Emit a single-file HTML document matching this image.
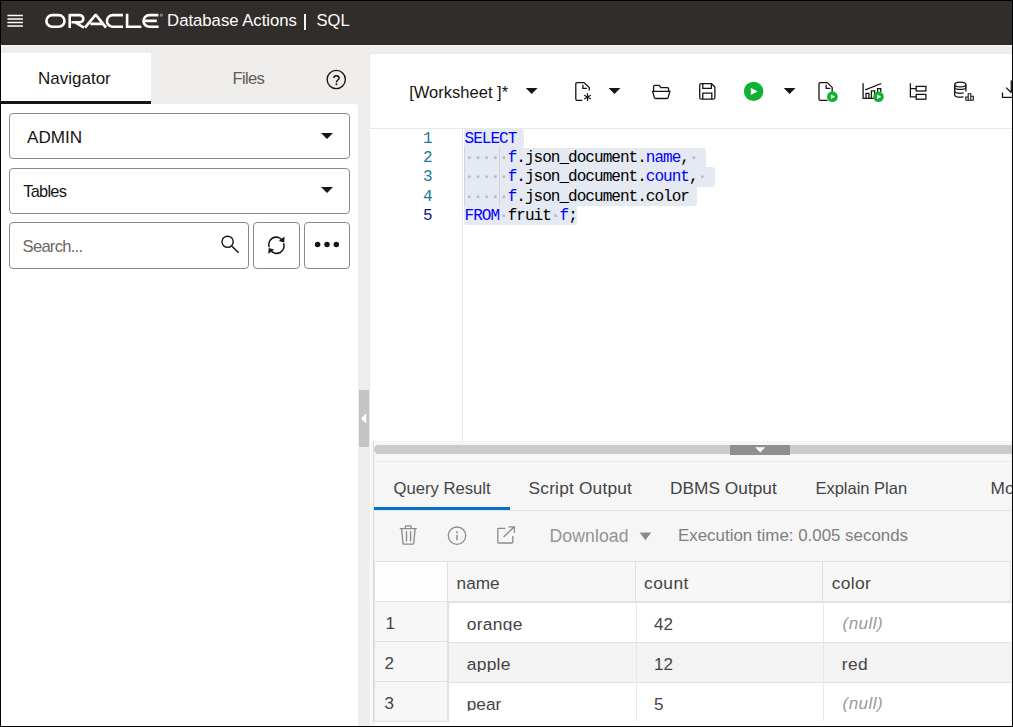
<!DOCTYPE html>
<html>
<head>
<meta charset="utf-8">
<title>Oracle Database Actions | SQL</title>
<style>
*{box-sizing:border-box;margin:0;padding:0}
html,body{width:1013px;height:727px;overflow:hidden;background:#fff}
body{position:relative;font-family:"Liberation Sans",sans-serif;color:#161513}
.a{position:absolute}
.t{position:absolute;white-space:pre;line-height:20px;font-size:17px}
svg{position:absolute;overflow:visible}
/* header */
#hdr{left:0;top:0;width:1013px;height:44px;background:#312d2a}
#hdrb{left:0;top:44px;width:1013px;height:2px;background:#f9f9f8;border-top:1px solid #2a2624}
#strip{left:0;top:45px;width:1013px;height:682px;background:#efeeec}
/* left */
#navtab{left:1px;top:53px;width:150px;height:48px;background:#fff}
#navul{left:0;top:101px;width:151px;height:3px;background:#161513}
#leftp{left:1px;top:104px;width:357px;height:623px;background:#fff;border-top-right-radius:4px}
.box{position:absolute;border:1px solid #8d8883;border-radius:4px;background:#fff}
/* right */
#rightp{left:369px;top:53px;width:644px;height:388px;background:#fff;border-top:1px solid #e9e8e6;border-left:1px solid #e9e8e6}
#tbline{left:370px;top:128px;width:643px;height:1px;background:#e8e8e8}
#gutter{left:462px;top:129px;width:1px;height:312px;background:#e3e3e3}
.sel{position:absolute;background:#e5e9f1}
.ln{position:absolute;white-space:pre;padding-top:1px;font-family:"Liberation Mono",monospace;font-size:16px;line-height:19px;color:#237893;width:30px;text-align:right;left:402.5px}
.code{position:absolute;white-space:pre;padding-top:1px;font-family:"Liberation Mono",monospace;font-size:16px;letter-spacing:-0.97px;line-height:19px;color:#000;left:464.5px}
.code b{font-weight:normal;color:#0000ff}
.code i{font-style:normal;font-weight:bold;color:#b4b8bf}
/* bottom */
#botw{left:370px;top:441px;width:643px;height:286px;background:#fff}
#bot{left:371px;top:441px;width:641px;height:286px;background:#f6f6f6}
#botl{left:373px;top:441px;width:1px;height:281px;background:#dcdcdc}
#bar{left:374px;top:445px;width:640px;height:9px;background:#cacaca;border-radius:5px 0 0 5px}
#barh{left:730px;top:445px;width:60px;height:10px;background:#8f8f8f}
#l461{left:374px;top:461px;width:638px;height:1px;background:#e9e9e9}
#l510{left:374px;top:510px;width:638px;height:1px;background:#e4e4e4}
#tabul{left:374px;top:507px;width:136px;height:3px;background:#0572ce}
.g{color:#444}
/* table */
#tbl{left:374px;top:561px;width:637px;height:161px;background:#fff}
.hl{position:absolute;background:#e0e0e0}
#frame{left:0;top:0;width:1013px;height:727px;border:1px solid #000;border-bottom-width:1px;z-index:99}
</style>
</head>
<body>
<div class="a" id="strip"></div>
<div class="a" id="hdr"></div>
<div class="a" id="hdrb"></div>

<!-- hamburger -->
<svg style="left:0;top:0" width="30" height="44" viewBox="0 0 30 44">
 <g stroke="#fff" stroke-width="1.5">
  <path d="M7.4 15.4H22.9M7.4 18.95H22.9M7.4 22.45H22.9M7.4 26H22.9"/>
 </g>
</svg>
<!-- ORACLE logo -->
<svg style="left:0;top:0" width="170" height="44" viewBox="0 0 170 44">
 <g fill="none" stroke="#fff" stroke-width="2.6" stroke-linejoin="miter">
  <rect x="46.4" y="15.1" width="18.1" height="11.6" rx="5.8"/>
  <path d="M69.7 28V15.1H79.7a3.6 3.6 0 0 1 0 7.2H71.5M75.2 22.4L84 27.6" stroke-linejoin="round"/>
  <path d="M85 27.6L95.7 14.6L106 27.6M90.4 23.9H103" stroke-linejoin="bevel"/>
  <path d="M123 15.1H112.7a5.8 5.8 0 0 0 0 11.6H123"/>
  <path d="M127.1 13.8V26.7H141.3"/>
  <path d="M158.4 15.1H149.3a5.8 5.8 0 0 0 0 11.6H158.6M144.4 20.9H156.8"/>
 </g>
 <circle cx="161.4" cy="15.2" r="1.1" fill="none" stroke="#fff" stroke-width="0.5"/>
</svg>
<span class="t" id="t_da" style="left:167.1px;top:11px;font-size:16.7px;color:#fff">Database Actions</span>
<div class="a" style="left:304px;top:14px;width:2px;height:16px;background:#f4f4f4"></div>
<span class="t" id="t_sql" style="left:316.6px;top:9.5px;font-size:16.5px;color:#fff">SQL</span>

<!-- left panel -->
<div class="a" id="navtab"></div>
<div class="a" id="navul"></div>
<div class="a" id="leftp"></div>
<span class="t" id="t_nav" style="left:38px;top:69px;font-size:17px">Navigator</span>
<span class="t" id="t_files" style="left:232.4px;top:69px;font-size:16.6px;letter-spacing:-0.65px;color:#5f5b57">Files</span>
<svg style="left:324px;top:68px" width="24" height="24" viewBox="324 68 24 24">
 <circle cx="336.25" cy="79.5" r="9.1" fill="none" stroke="#161513" stroke-width="1.35"/>
 <path d="M333.8 78.1C333.8 76.5 335 75.7 336.4 75.7C337.9 75.7 339.1 76.6 339.1 78C339.1 80 336.4 80.1 336.4 82.4" fill="none" stroke="#161513" stroke-width="1.5"/>
 <circle cx="336.4" cy="84.3" r="0.95" fill="#161513"/>
</svg>

<div class="box" style="left:9px;top:113px;width:341px;height:46px"></div>
<span class="t" id="t_admin" style="left:27px;top:128px;font-size:17.1px">ADMIN</span>
<svg style="left:320px;top:132px" width="14" height="8" viewBox="0 0 14 8"><path d="M1 1H13L7 7Z" fill="#161513"/></svg>

<div class="box" style="left:9px;top:168px;width:341px;height:46px"></div>
<span class="t" id="t_tables" style="left:23.3px;top:181px;font-size:16.4px;letter-spacing:-0.75px">Tables</span>
<svg style="left:320px;top:186px" width="14" height="8" viewBox="0 0 14 8"><path d="M1 1H13L7 7Z" fill="#161513"/></svg>

<div class="box" style="left:9px;top:222px;width:240px;height:47px"></div>
<span class="t" id="t_search" style="left:22.6px;top:237px;font-size:16.6px;letter-spacing:-0.75px;color:#6b6661">Search...</span>
<svg style="left:218px;top:232px" width="26" height="26" viewBox="218 232 26 26">
 <circle cx="227.6" cy="241.8" r="5.6" fill="none" stroke="#161513" stroke-width="1.4"/>
 <path d="M231.7 246L238.6 252.8" stroke="#161513" stroke-width="1.5"/>
</svg>
<div class="box" style="left:253px;top:222px;width:47px;height:47px"></div>
<svg style="left:264px;top:233px" width="26" height="26" viewBox="264 233 26 26">
 <g fill="none" stroke="#161513" stroke-width="1.5">
  <path d="M269.3 247.2A7.4 7.4 0 0 1 282.2 240.2"/>
  <path d="M283.6 243.3A7.4 7.4 0 0 1 270.7 250.3"/>
 </g>
 <path d="M284.6 236.6L284.2 242.6L278.8 241Z" fill="#161513"/>
 <path d="M268.3 253.9L268.7 247.9L274.1 249.5Z" fill="#161513"/>
</svg>
<div class="box" style="left:304px;top:222px;width:46px;height:47px"></div>
<svg style="left:310px;top:238px" width="34" height="12" viewBox="310 238 34 12">
 <circle cx="317.6" cy="244.4" r="2.75" fill="#161513"/><circle cx="327" cy="244.4" r="2.75" fill="#161513"/><circle cx="336.3" cy="244.4" r="2.75" fill="#161513"/>
</svg>

<!-- vertical splitter handle -->
<div class="a" style="left:359px;top:390px;width:10px;height:57px;background:#c4c4c4"></div>
<svg style="left:359px;top:410px" width="10" height="18" viewBox="359 410 10 18"><path d="M366.2 413.6V423.4L361 418.5Z" fill="#fff"/></svg>

<!-- right panel -->
<div class="a" id="rightp"></div>
<div class="a" id="tbline"></div>
<div class="a" id="gutter"></div>
<span class="t" id="t_ws" style="left:409.2px;top:82.6px;font-size:16.55px">[Worksheet ]*</span>
<svg style="left:525px;top:87px" width="14" height="8" viewBox="0 0 14 8"><path d="M0.8 1H12.6L6.7 7Z" fill="#161513"/></svg>

<!-- toolbar icons -->
<svg id="icons" style="left:560px;top:70px" width="453" height="42" viewBox="560 70 453 42">
 <g fill="none" stroke="#161513" stroke-width="1.3">
  <!-- new file -->
  <path d="M582.3 100.3H577Q575.8 100.3 575.8 99.1V83.8Q575.8 82.6 577 82.6H583.9L589.3 87.5V90.4"/>
  <path d="M582.9 84.7V88.3H586.9"/>
  <path d="M587.5 93.3V100.9M584.2 95.2L590.8 99M590.8 95.2L584.2 99" stroke-width="1.25"/>
  <!-- folder -->
  <path d="M653.6 91V86.6Q653.6 85.4 654.8 85.4H658.6Q659.4 85.4 659.9 86.2L660.8 87.6H667.4Q668.6 87.6 668.6 88.8V91"/>
  <path d="M652.6 91.3H669.9L668.2 97.4Q667.9 98.5 666.8 98.5H655.7Q654.6 98.5 654.3 97.4Z"/>
  <!-- save -->
  <path d="M701.2 83.7H711.6L714.9 87V97.6Q714.9 99.1 713.4 99.1H701.2Q699.7 99.1 699.7 97.6V85.2Q699.7 83.7 701.2 83.7Z"/>
  <path d="M702.8 83.9V88.3H711.4V83.9"/>
  <path d="M702.8 99V93.2H711.8V99"/>
  <!-- run script doc -->
  <path d="M827.6 100.3H820.2Q819 100.3 819 99.1V83.8Q819 82.6 820.2 82.6H827.3L832.2 87.4V92"/>
  <path d="M826.1 84.7V88.3H830.2"/>
  <!-- chart -->
  <path d="M863.1 83.2V98.4H874"/>
  <path d="M865.2 89.8L881.2 83.5"/>
  <path d="M866 98.2V93.3H868.9V98.2M871.4 98.2V90.9H874.7V95M877.6 92V88.6H880.8V92"/>
  <!-- tree -->
  <path d="M910.4 83.3V96.8H916M910.4 88.7H916"/>
  <rect x="916.2" y="86.4" width="9.7" height="4.6"/>
  <rect x="916.2" y="94.4" width="9.7" height="4.8"/>
  <!-- db -->
  <ellipse cx="960.3" cy="84.5" rx="5.6" ry="2.4"/>
  <path d="M954.7 84.5V94.7C954.7 96.1 957.2 97.2 960.3 97.2C961.5 97.2 962.6 97.05 963.5 96.8M965.9 84.5V91.6"/>
  <path d="M954.7 86.9C954.7 88.3 957.2 89.4 960.3 89.4C963.4 89.4 965.9 88.3 965.9 86.9" stroke-width="1.15"/>
  <path d="M954.7 90.8C954.7 92.2 957.2 93.3 960.3 93.3C961.5 93.3 962.6 93.15 963.6 92.9" stroke-width="1.15"/>
  <path d="M965.8 100.2V97H968.2V100.2M968.2 100.2V93.8H970.8V100.2M970.8 100.2V96.2H973.3V100.2H965.8" stroke-width="1.1"/>
  <!-- download -->
  <path d="M1011.3 80.5V92.5M1006.2 87.6L1011.4 92.8"/>
  <path d="M1002.5 92.6V97.3H1013"/>
 </g>
 <!-- play -->
 <circle cx="753.6" cy="91.4" r="9.7" fill="#10b236"/>
 <path d="M750.9 87.7V95.1L757.5 91.4Z" fill="#fff"/>
 <circle cx="832.4" cy="96.7" r="5.4" fill="#10b236"/>
 <path d="M830.9 94.4V99L835.1 96.7Z" fill="#fff"/>
 <circle cx="878.5" cy="96.8" r="5.3" fill="#10b236"/>
 <path d="M877 94.5V99.1L881.2 96.8Z" fill="#fff"/>
 <!-- arrows -->
 <path d="M608.6 88H620.4L614.5 94Z" fill="#161513"/>
 <path d="M783.7 88H795.5L789.6 94Z" fill="#161513"/>
</svg>

<!-- editor -->
<div class="sel" style="left:464px;top:129px;width:60px;height:19px;border-radius:3px 3px 3px 0"></div>
<div class="sel" style="left:464px;top:148px;width:242px;height:19px;border-radius:0 3px 0 0"></div>
<div class="sel" style="left:464px;top:167px;width:250.6px;height:20px;border-radius:0 3px 3px 0"></div>
<div class="sel" style="left:464px;top:187px;width:232.6px;height:19px;border-radius:0 0 3px 0"></div>
<div class="sel" style="left:464px;top:206px;width:112.8px;height:18.5px;border-radius:0 0 3px 3px"></div>
<div class="a" style="left:464px;top:148px;width:1px;height:58px;background:#d0d3d8"></div>
<div class="a" style="left:499px;top:148px;width:1px;height:58px;background:#d0d3d8"></div>
<span class="ln" style="top:129px">1</span>
<span class="ln" style="top:148px">2</span>
<span class="ln" style="top:167px">3</span>
<span class="ln" style="top:187px">4</span>
<span class="ln" style="top:206px;color:#0b216f">5</span>
<span class="code" style="top:129px"><b>SELECT</b></span>
<span class="code" style="top:148px"><i>·····</i><b>f</b>.json_document.<b>name</b>,<i>·</i></span>
<span class="code" style="top:167px"><i>·····</i><b>f</b>.json_document.<b>count</b>,<i>·</i></span>
<span class="code" style="top:187px"><i>·····</i><b>f</b>.json_document.color</span>
<span class="code" style="top:206px"><b>FROM</b><i>·</i>fruit<i>·</i><b>f</b>;</span>

<!-- bottom panel -->
<div class="a" id="botw"></div>
<div class="a" id="bot"></div>
<div class="a" id="botl"></div>
<div class="a" id="bar"></div>
<div class="a" id="barh"></div>
<svg style="left:750px;top:445px" width="20" height="10" viewBox="750 445 20 10"><path d="M755.2 447.2H765.2L760.2 452.6Z" fill="#fff"/></svg>
<div class="a" id="l461"></div>
<div class="a" id="l510"></div>
<div class="a" id="tabul"></div>
<span class="t g" id="t_qr" style="left:393.5px;top:479px;font-size:16.65px">Query Result</span>
<span class="t g" id="t_so" style="left:528.6px;top:477.5px;font-size:17.3px;letter-spacing:0.2px">Script Output</span>
<span class="t g" id="t_do" style="left:670px;top:477.5px;font-size:17.3px;letter-spacing:0.02px">DBMS Output</span>
<span class="t g" id="t_ep" style="left:815.4px;top:477.5px;font-size:16.5px">Explain Plan</span>
<span class="t g" id="t_mo" style="left:990.5px;top:477.5px;font-size:17.3px">Mo</span>

<!-- result toolbar -->
<svg style="left:395px;top:520px" width="130" height="30" viewBox="395 520 130 30">
 <g fill="none" stroke="#8a8a8a" stroke-width="1.3">
  <!-- trash -->
  <path d="M399.8 528.6H416.8M405.4 528.4V526.4Q405.4 525.8 406 525.8H410.6Q411.2 525.8 411.2 526.4V528.4"/>
  <path d="M401.6 528.8L403 543.4Q403.1 544.2 403.9 544.2H412.8Q413.6 544.2 413.7 543.4L415.1 528.8"/>
  <path d="M406.5 531.2V541.6M410.6 531.2V541.6" stroke-width="1.3"/>
  <!-- info -->
  <circle cx="457" cy="535.7" r="8.7"/>
  <path d="M457 534.8V540.3" stroke-width="1.4"/>
  <!-- external -->
  <path d="M505.4 528.4H498.6Q497.8 528.4 497.8 529.2V542.2Q497.8 543 498.6 543H512Q512.8 543 512.8 542.2V536"/>
  <path d="M503.6 537L514.2 526.8M508.4 526.8H514.4V532.8"/>
 </g>
 <circle cx="457" cy="532.2" r="0.95" fill="#8a8a8a"/>
</svg>
<span class="t" id="t_dl" style="left:549.5px;top:526px;font-size:17.6px;letter-spacing:0.1px;color:#949494">Download</span>
<svg style="left:639px;top:532px" width="13" height="9" viewBox="639 532 13 9"><path d="M639.6 532.4H651.2L645.4 540.2Z" fill="#8a8a8a"/></svg>
<span class="t" id="t_ex" style="left:678px;top:525.5px;font-size:16.9px;color:#7e7e7e">Execution time: 0.005 seconds</span>

<!-- table -->
<div class="a" id="tbl"></div>
<!-- header row -->
<div class="a" style="left:375px;top:562px;width:72px;height:39px;background:#fcfdfc"></div>
<div class="a" style="left:448px;top:562px;width:563px;height:39px;background:#f7f7f7"></div>
<!-- row number cells -->
<div class="a" style="left:375px;top:602px;width:72px;height:119px;background:#f7f7f7"></div>
<!-- row 2 -->
<div class="a" style="left:449px;top:643px;width:562px;height:39px;background:#f3f3f3"></div>
<!-- grid lines -->
<div class="hl" style="left:374px;top:561px;width:637px;height:1px"></div>
<div class="hl" style="left:374px;top:601px;width:74px;height:1px;background:#e2e2e2"></div>
<div class="hl" style="left:448px;top:601px;width:563px;height:2px;background:#e0e2e1"></div>
<div class="hl" style="left:374px;top:641px;width:74px;height:1px"></div>
<div class="hl" style="left:449px;top:642px;width:562px;height:1px"></div>
<div class="hl" style="left:374px;top:681px;width:74px;height:1px"></div>
<div class="hl" style="left:449px;top:682px;width:562px;height:1px"></div>
<div class="hl" style="left:374px;top:721px;width:74px;height:1px"></div>
<div class="hl" style="left:374px;top:561px;width:1px;height:161px"></div>
<div class="hl" style="left:447px;top:562px;width:1px;height:40px"></div>
<div class="hl" style="left:447px;top:602px;width:2px;height:120px;background:#e0e2e1"></div>
<div class="hl" style="left:635px;top:562px;width:1px;height:40px"></div>
<div class="hl" style="left:822px;top:562px;width:1px;height:40px"></div>
<div class="hl" style="left:636px;top:603px;width:1px;height:118px;background:#e8e8e8"></div>
<div class="hl" style="left:823px;top:603px;width:1px;height:118px;background:#e8e8e8"></div>
<div class="hl" style="left:1010px;top:562px;width:1px;height:40px;background:#e6e6e6"></div>

<span class="t g" id="t_name" style="left:456.6px;top:573px;font-size:17.2px">name</span>
<span class="t g" id="t_count" style="left:644px;top:573px;font-size:17.4px;letter-spacing:0.45px">count</span>
<span class="t g" id="t_color" style="left:831.8px;top:573px;font-size:17.4px;letter-spacing:0.3px">color</span>

<span class="t g" id="t_r1" style="left:385.5px;top:613.5px;font-size:17px">1</span>
<span class="t g" id="t_r2" style="left:384.6px;top:653.5px;font-size:17px">2</span>
<span class="t g" id="t_r3" style="left:384.6px;top:693.5px;font-size:17px">3</span>

<div class="a clip" style="left:449px;top:603px;width:186px;height:28px;overflow:hidden"><span class="t g" id="t_orange" style="left:17.8px;top:11px;font-size:17.4px;letter-spacing:0.3px">orange</span></div>
<div class="a clip" style="left:449px;top:643px;width:186px;height:28.5px;overflow:hidden"><span class="t g" id="t_apple" style="left:17.8px;top:11px;font-size:17.4px;letter-spacing:0.25px">apple</span></div>
<div class="a clip" style="left:449px;top:683px;width:186px;height:28px;overflow:hidden"><span class="t g" id="t_pear" style="left:17.8px;top:11px;font-size:17.2px">pear</span></div>

<span class="t g" id="t_42" style="left:654px;top:615px;font-size:17px">42</span>
<span class="t g" id="t_12" style="left:654px;top:655px;font-size:17px">12</span>
<span class="t g" id="t_5" style="left:654px;top:695px;font-size:17px">5</span>

<span class="t" id="t_n1" style="left:842.5px;top:614px;font-size:17px;font-style:italic;letter-spacing:0.5px;color:#9a9a9a">(null)</span>
<span class="t g" id="t_red" style="left:841.8px;top:654px;font-size:17.4px;letter-spacing:0.4px">red</span>
<span class="t" id="t_n3" style="left:842.5px;top:694px;font-size:17px;font-style:italic;letter-spacing:0.5px;color:#9a9a9a">(null)</span>

<div class="a" style="left:375px;top:722px;width:637px;height:5px;background:#fff"></div>
<div class="a" id="frame"></div>
</body>
</html>
